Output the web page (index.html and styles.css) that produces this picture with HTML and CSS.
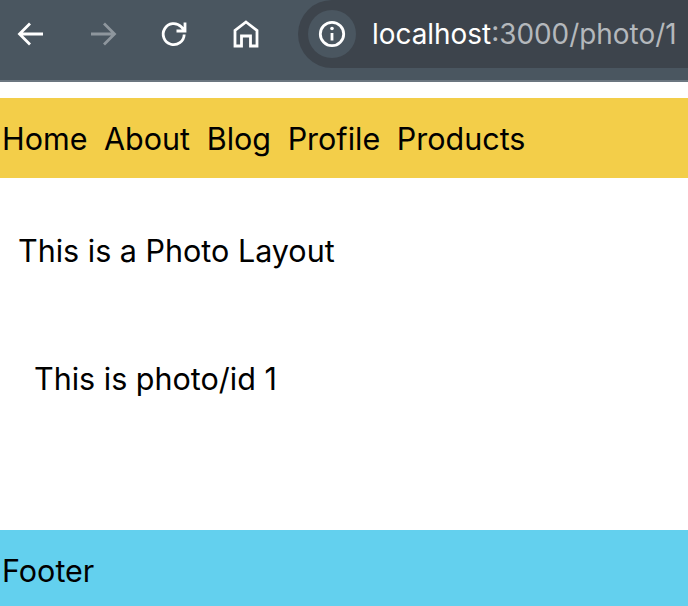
FILE: index.html
```html
<!DOCTYPE html>
<html lang="en">
<head>
  <meta charset="utf-8" />
  <meta name="viewport" content="width=device-width, initial-scale=1" />
  <title>Photo</title>
  <link rel="stylesheet" href="styles.css">
</head>
<body>

<div class="browser-bar">
  <div class="bar-icon">
    <svg width="28" height="28" viewBox="0 0 28 28"><path d="M26 14H3M13 3.500 2.500 14 13 24.500" /></svg>
  </div>
  <div class="bar-icon dim">
    <svg width="28" height="28" viewBox="0 0 28 28"><path d="M2 14h23M15 3.500 25.500 14 15 24.500" /></svg>
  </div>
  <div class="bar-icon">
    <svg width="28" height="28" viewBox="0 0 28 28"><path d="M24.200 14.500a10.500 10.500 0 1 1-3-7.700l3 3.200M25 2.500V11h-8.500" /></svg>
  </div>
  <div class="bar-icon">
    <svg width="28" height="28" viewBox="0 0 28 28"><path d="M14 2 25 10.500V26h-6.500V16h-9v10H3V10.500z" /></svg>
  </div>
  <div class="address">
    <div class="info-badge">
      <svg width="28" height="28" viewBox="0 0 28 28">
        <circle cx="14" cy="14" r="11.700" />
        <path d="M14 13v7.500" />
        <circle class="dot" cx="14" cy="8.500" r="1.800" />
      </svg>
    </div>
    <span class="host">localhost</span><span class="port">:3000/photo/1</span>
  </div>
</div>

<nav class="nav">
  <a href="#">Home</a>
  <a href="#">About</a>
  <a href="#">Blog</a>
  <a href="#">Profile</a>
  <a href="#">Products</a>
</nav>

<div class="layout">
  <p class="layout-title">This is a Photo Layout</p>
  <p class="photo">This is photo/id 1</p>
</div>

<footer class="footer">Footer</footer>

</body>
</html>
```

FILE: styles.css
```css
body {
  margin: 0;
  font-family: Inter, "Liberation Sans", sans-serif;
  background-color: #ffffff;
  color: #000000;
  overflow: hidden;
}

.browser-bar {
  display: flex;
  align-items: flex-start;
  gap: 43.5px;
  height: 80px;
  padding-left: 17px;
  background-color: #4a5660;
  border-bottom: 2px solid #6b7680;
  overflow: hidden;
}

.bar-icon {
  display: flex;
  flex: none;
  margin-top: 20px;
}

.bar-icon svg,
.info-badge svg {
  fill: none;
  stroke: #ffffff;
  stroke-width: 2.8;
}

.bar-icon.dim svg {
  stroke: #8e969d;
}

.address {
  display: flex;
  align-items: center;
  flex: none;
  width: 420px;
  height: 68px;
  margin-left: -5px;
  padding-left: 10px;
  border-radius: 34px;
  background-color: #3d444c;
  font-size: 27.9px;
  white-space: nowrap;
}

.info-badge {
  display: flex;
  flex: none;
  align-items: center;
  justify-content: center;
  width: 48px;
  height: 48px;
  margin-right: 16px;
  border-radius: 50%;
  background-color: #4a5660;
}

.info-badge .dot {
  fill: #ffffff;
  stroke: none;
}

.host {
  color: #ffffff;
}

.port {
  color: #b4b8bc;
}

.nav {
  display: flex;
  align-items: center;
  gap: 16.6px;
  height: 80px;
  margin-top: 16px;
  padding-left: 2px;
  background-color: #f3ce49;
  font-size: 30.5px;
}

.nav a {
  color: #000000;
  text-decoration: none;
}

.layout {
  height: 352px;
  padding-left: 18px;
  font-size: 30.5px;
  overflow: hidden;
}

.layout-title {
  margin: 55px 0 0;
  line-height: 36px;
}

.photo {
  margin: 92px 0 0 16px;
  line-height: 36px;
}

.footer {
  display: flex;
  align-items: center;
  height: 76px;
  padding: 4px 0 0 2px;
  box-sizing: border-box;
  background-color: #63d0ee;
  font-size: 30.5px;
}
```
